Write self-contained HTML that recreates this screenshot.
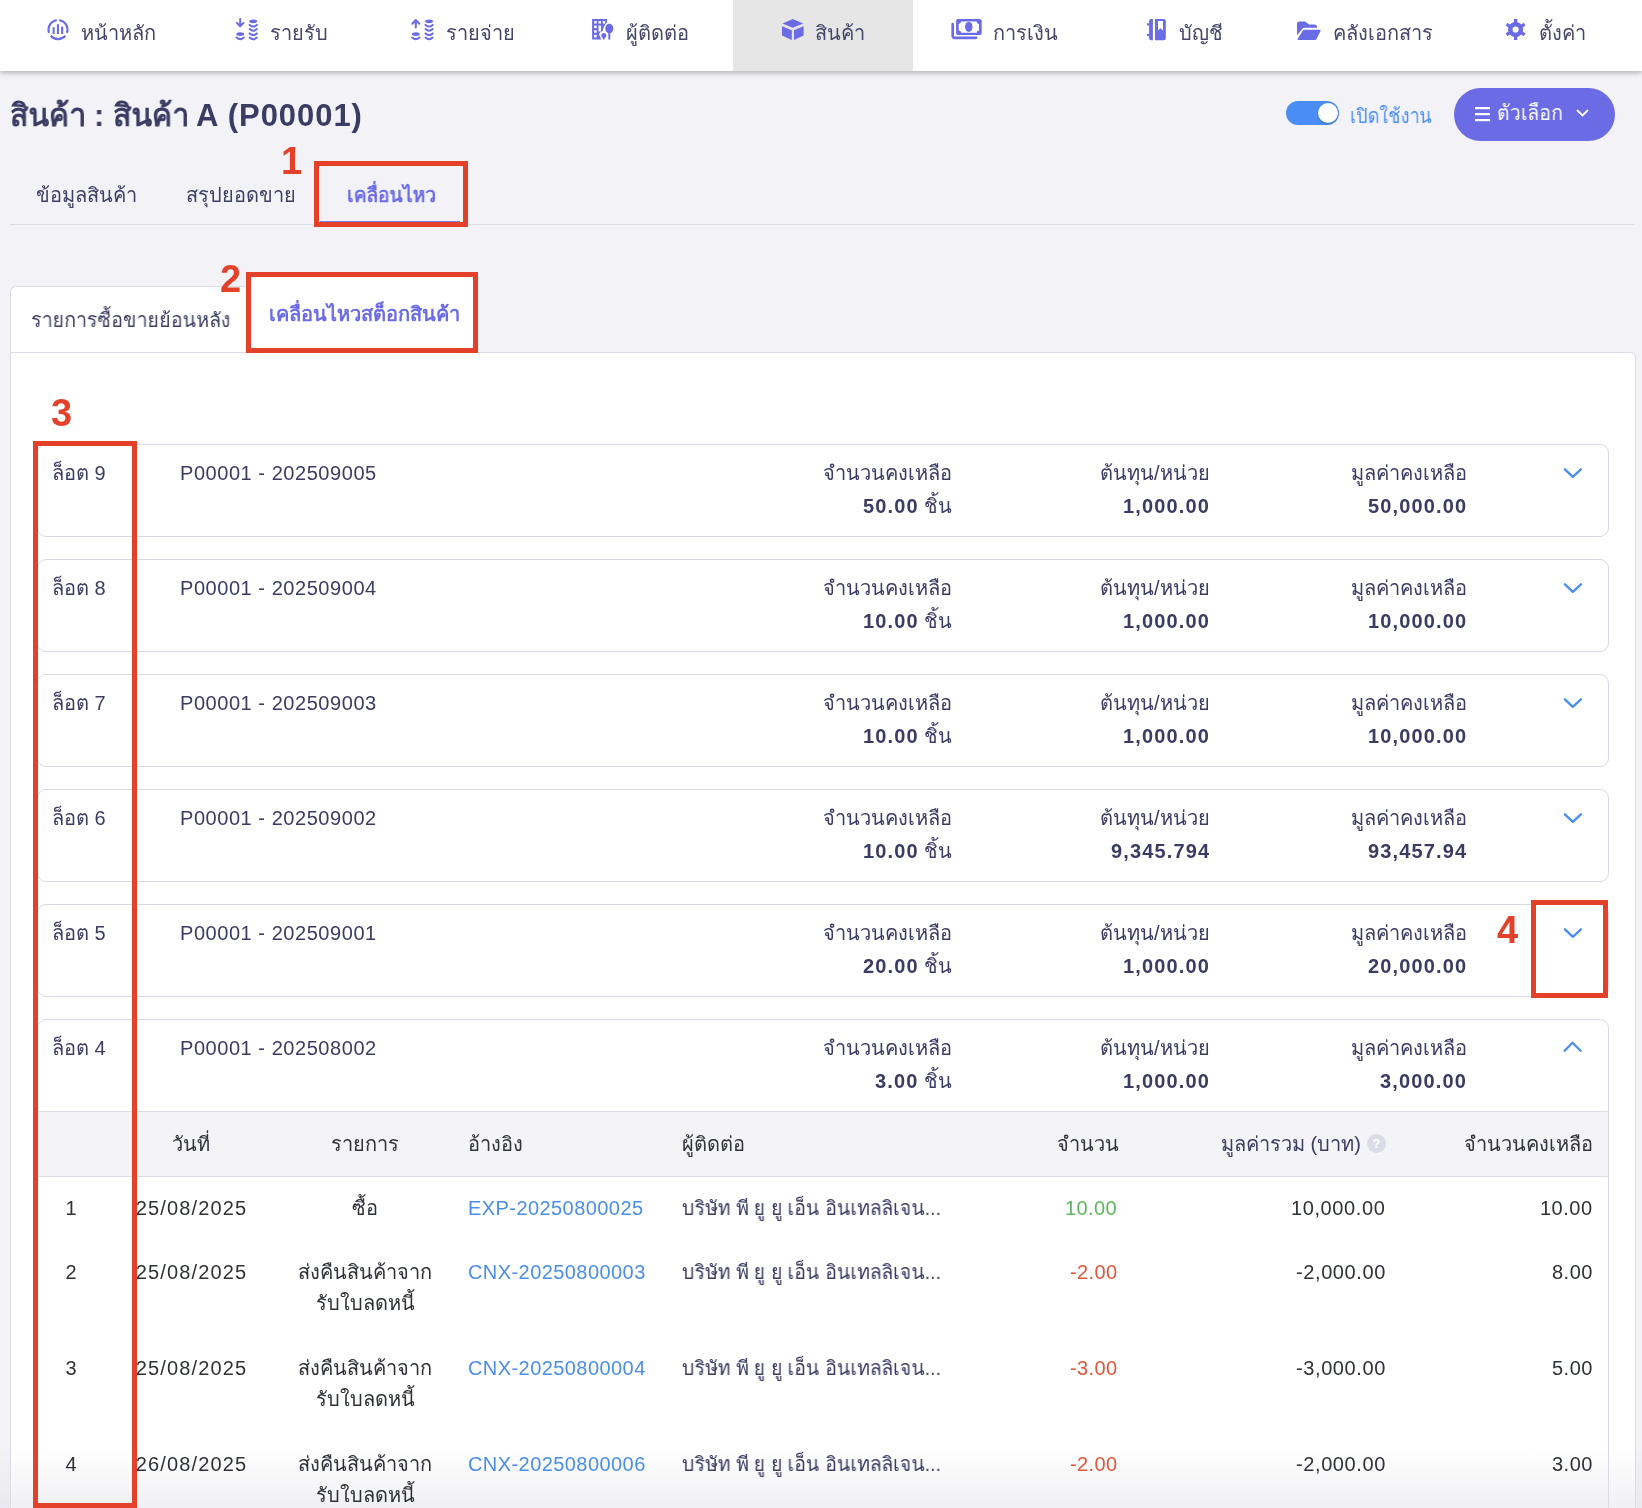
<!DOCTYPE html>
<html><head><meta charset="utf-8"><style>
*{box-sizing:border-box;margin:0;padding:0}
html,body{width:1642px;height:1508px;overflow:hidden}
body{background:#f3f2f7;font-family:"Liberation Sans",sans-serif;color:#3b3c63;position:relative}
.a,.ni,.td,.th,.rn{will-change:transform}
.a{position:absolute;white-space:nowrap}
#nav{position:absolute;left:0;top:0;width:1642px;height:71px;background:#fff;box-shadow:0 2px 5px rgba(0,0,0,.26);z-index:2}
#nav .act{position:absolute;left:733px;top:0;width:180px;height:71px;background:#e7e6e7}
.ni{position:absolute;top:18px;height:30px;line-height:30px;font-size:20px;color:#454669;white-space:nowrap}
.ic{position:absolute}
.red{position:absolute;border:5px solid #e4412b;z-index:5}
.rn{position:absolute;color:#e4412b;font-weight:bold;font-size:38px;line-height:38px;z-index:5}
.card{position:absolute;left:37px;width:1572px;height:93px;background:#fff;border:1px solid #d9d9e6;border-radius:9px}
.t20{font-size:20px;line-height:26px}
.r{text-align:right}
.b{font-weight:bold}
.chev{position:absolute}
.th{position:absolute;font-size:20px;line-height:26px;color:#30333b;white-space:nowrap}
.td{position:absolute;font-size:20px;line-height:26px;color:#2e3138;white-space:nowrap}
</style></head><body>
<div id="nav"><div class="act"></div>
<div class="ni" style="left:81px">หน้าหลัก</div>
<div class="ni" style="left:270px">รายรับ</div>
<div class="ni" style="left:446px">รายจ่าย</div>
<div class="ni" style="left:626px">ผู้ติดต่อ</div>
<div class="ni" style="left:815px">สินค้า</div>
<div class="ni" style="left:993px">การเงิน</div>
<div class="ni" style="left:1179px">บัญชี</div>
<div class="ni" style="left:1333px">คลังเอกสาร</div>
<div class="ni" style="left:1539px">ตั้งค่า</div>
<svg class="ic" style="left:44px;top:16px" width="30" height="30" viewBox="0 0 30 30"><path d="M12.84 4.17 A9.5 9.5 0 0 0 5.07 16.85 M6.72 19.71 A9.5 9.5 0 0 0 21.28 19.71 M22.93 16.85 A9.5 9.5 0 0 0 15.16 4.17" fill="none" stroke="#6b6be6" stroke-width="2.1"/><rect x="8.600000000000001" y="11.2" width="2.1" height="6.8" fill="#6b6be6"/><rect x="12.899999999999999" y="8.2" width="2.1" height="9.8" fill="#6b6be6"/><rect x="17.1" y="10.600000000000001" width="2.1" height="7.4" fill="#6b6be6"/></svg><svg class="ic" style="left:232px;top:16px" width="30" height="28" viewBox="0 0 30 28"><path d="M8.199999999999989 3.1000000000000014 V10 M4.899999999999989 6.899999999999999 L8.199999999999989 10.3 L11.49999999999999 6.899999999999999" stroke="#6b6be6" stroke-width="2" fill="none" stroke-linecap="round" stroke-linejoin="round"/><ellipse cx="8.199999999999989" cy="18.1" rx="3.9" ry="1.9" fill="#6b6be6"/><path d="M4.599999999999989 21.5 Q8.199999999999989 24.799999999999997 11.799999999999988 21.5" stroke="#6b6be6" stroke-width="2" fill="none" stroke-linecap="round"/><ellipse cx="21.19999999999999" cy="5.300000000000001" rx="3.9" ry="1.9" fill="#6b6be6"/><path d="M17.599999999999987 8.9 Q21.19999999999999 12.200000000000001 24.79999999999999 8.9" stroke="#6b6be6" stroke-width="2" fill="none" stroke-linecap="round"/><path d="M17.599999999999987 13.1 Q21.19999999999999 16.4 24.79999999999999 13.1" stroke="#6b6be6" stroke-width="2" fill="none" stroke-linecap="round"/><path d="M17.599999999999987 17.4 Q21.19999999999999 20.699999999999996 24.79999999999999 17.4" stroke="#6b6be6" stroke-width="2" fill="none" stroke-linecap="round"/><path d="M17.599999999999987 21.6 Q21.19999999999999 24.9 24.79999999999999 21.6" stroke="#6b6be6" stroke-width="2" fill="none" stroke-linecap="round"/></svg><svg class="ic" style="left:407px;top:16px" width="30" height="28" viewBox="0 0 30 28"><path d="M8.800000000000011 11.399999999999999 V4.5 M5.300000000000011 7.699999999999999 L8.800000000000011 4 L12.300000000000011 7.699999999999999" stroke="#6b6be6" stroke-width="2" fill="none" stroke-linecap="round" stroke-linejoin="round"/><ellipse cx="8.800000000000011" cy="18.1" rx="3.9" ry="1.9" fill="#6b6be6"/><path d="M5.200000000000012 21.5 Q8.800000000000011 24.799999999999997 12.400000000000011 21.5" stroke="#6b6be6" stroke-width="2" fill="none" stroke-linecap="round"/><ellipse cx="22.100000000000023" cy="5.300000000000001" rx="3.9" ry="1.9" fill="#6b6be6"/><path d="M18.50000000000002 8.9 Q22.100000000000023 12.200000000000001 25.700000000000024 8.9" stroke="#6b6be6" stroke-width="2" fill="none" stroke-linecap="round"/><path d="M18.50000000000002 13.1 Q22.100000000000023 16.4 25.700000000000024 13.1" stroke="#6b6be6" stroke-width="2" fill="none" stroke-linecap="round"/><path d="M18.50000000000002 17.4 Q22.100000000000023 20.699999999999996 25.700000000000024 17.4" stroke="#6b6be6" stroke-width="2" fill="none" stroke-linecap="round"/><path d="M18.50000000000002 21.6 Q22.100000000000023 24.9 25.700000000000024 21.6" stroke="#6b6be6" stroke-width="2" fill="none" stroke-linecap="round"/></svg><svg class="ic" style="left:587px;top:14px" width="30" height="30" viewBox="0 0 30 30"><path d="M5.100000000000023 5.100000000000001 H20 V8.5 Q16.5 11.5 15.700000000000045 17 L13 18.5 Q11 20.5 13.5 23 L14 25.5 H5.100000000000023Z" fill="#6b6be6"/><rect x="7.15" y="7.05" width="2.50" height="2.50" fill="#fff"/><rect x="11.45" y="7.05" width="2.50" height="2.50" fill="#fff"/><rect x="15.75" y="7.05" width="2.50" height="2.50" fill="#fff"/><rect x="7.15" y="11.55" width="2.50" height="2.50" fill="#fff"/><rect x="7.15" y="16.25" width="2.50" height="2.50" fill="#fff"/><rect x="7.15" y="20.85" width="2.50" height="2.50" fill="#fff"/><rect x="11.50" y="11.50" width="2.50" height="6.00" fill="#fff"/><ellipse cx="22.299999999999955" cy="14.600000000000001" rx="5" ry="5.9" fill="#fff"/><ellipse cx="22.299999999999955" cy="14.600000000000001" rx="4" ry="4.9" fill="#6b6be6"/><rect x="21.30" y="18.00" width="2.00" height="7.50" fill="#6b6be6"/><circle cx="16.799999999999955" cy="21.6" r="3.5" fill="#fff"/><circle cx="16.799999999999955" cy="21.6" r="2.5" fill="#6b6be6"/><rect x="16.00" y="22.50" width="1.60" height="3.00" fill="#6b6be6"/></svg><svg class="ic" style="left:776px;top:14px" width="32" height="32" viewBox="0 0 32 32"><path d="M6.40 9.40 L16.80 5.10 L27.20 9.40 L16.80 13.80Z M6.00 12.20 L15.80 16.30 L15.80 26.00 L6.00 21.50Z M27.60 12.20 L18.00 16.30 L18.00 26.00 L27.60 21.50Z" fill="#6b6be6"/></svg><svg class="ic" style="left:946px;top:12px" width="40" height="32" viewBox="0 0 40 32"><rect x="10.100000000000023" y="7.100000000000001" width="25.6" height="16" rx="2.2" fill="#6b6be6"/><path d="M15.00 9.60 L30.70 9.60 A2.3 2.3 0 0 0 33.00 11.90 L33.00 18.50 A2.3 2.3 0 0 0 30.70 20.80 L15.00 20.80 A2.3 2.3 0 0 0 12.70 18.50 L12.70 11.90 A2.3 2.3 0 0 0 15.00 9.60Z" fill="#fff"/><ellipse cx="22.799999999999955" cy="14.899999999999999" rx="3.7" ry="5" fill="#6b6be6"/><path d="M6.70 12.20 L6.70 24.00 A1.8 1.8 0 0 0 8.50 25.80 L30.00 25.80" fill="none" stroke="#6b6be6" stroke-width="2.7" stroke-linecap="round"/></svg><svg class="ic" style="left:1141px;top:14px" width="32" height="32" viewBox="0 0 32 32"><path d="M10.20 5.10 L11.90 5.10 L11.90 26.30 L10.20 26.30 A2.1 2.1 0 0 1 8.10 24.20 L8.10 7.20 A2.1 2.1 0 0 1 10.20 5.10Z" fill="#6b6be6"/><rect x="6.00" y="9.30" width="2.50" height="2.20" fill="#6b6be6"/><rect x="6.00" y="19.90" width="2.50" height="2.20" fill="#6b6be6"/><path d="M14.00 5.10 L22.60 5.10 A2.2 2.2 0 0 1 24.80 7.30 L24.80 24.10 A2.2 2.2 0 0 1 22.60 26.30 L14.00 26.30Z" fill="#6b6be6"/><path d="M17.00 7.00 L22.00 7.00 L22.00 16.50 L19.50 14.30 L17.00 16.50Z" fill="#fff"/></svg><svg class="ic" style="left:1293px;top:14px" width="32" height="32" viewBox="0 0 32 32"><path d="M4.00 21.20 L4.00 9.80 A2.2 2.2 0 0 1 6.20 7.60 L12.10 7.60 L16.10 10.40 L21.40 10.40 A2.6 2.6 0 0 1 24.00 13.00 L24.00 13.70 L11.30 13.70 A2.2 2.2 0 0 0 9.30 14.90Z" fill="#6b6be6"/><path d="M11.30 15.70 L26.60 15.70 A1 1 0 0 1 27.50 17.00 L23.40 25.20 A1.8 1.8 0 0 1 21.80 26.10 L5.60 26.10 A1 1 0 0 1 4.70 24.70 L9.70 16.70 A2 2 0 0 1 11.30 15.70Z" fill="#6b6be6"/></svg><svg class="ic" style="left:1500px;top:14px" width="32" height="32" viewBox="0 0 32 32"><path d="M11.80 8.92 L14.02 8.07 L13.85 5.05 L17.35 5.05 L17.18 8.07 L19.40 8.92 L21.25 10.41 L23.78 8.76 L25.53 11.79 L22.83 13.15 L23.20 15.50 L22.83 17.85 L25.53 19.21 L23.78 22.24 L21.25 20.59 L19.40 22.08 L17.18 22.93 L17.35 25.95 L13.85 25.95 L14.02 22.93 L11.80 22.08 L9.95 20.59 L7.42 22.24 L5.67 19.21 L8.37 17.85 L8.00 15.50 L8.37 13.15 L5.67 11.79 L7.42 8.76 L9.95 10.41Z M18.70 15.5 A3.1 3.1 0 1 0 12.50 15.5 A3.1 3.1 0 1 0 18.70 15.5Z" fill="#6b6be6" fill-rule="evenodd"/></svg>
</div>
<div class="a b" style="left:10px;top:96px;font-size:31px;line-height:40px;color:#3b3c63;transform:scaleX(0.972);transform-origin:0 0">สินค้า : สินค้า</div>
<div class="a b" style="left:196px;top:96px;font-size:31px;line-height:40px;color:#3b3c63;letter-spacing:0.95px">A (P00001)</div>
<div class="a" style="left:1286px;top:101px;width:53px;height:24px;border-radius:12px;background:#4a8ef5"></div>
<div class="a" style="left:1318px;top:103px;width:20px;height:20px;border-radius:10px;background:#fff;box-shadow:0 1px 2px rgba(0,0,0,.25)"></div>
<div class="a t20" style="left:1350px;top:102px;color:#4a8ef5;line-height:28px;transform:scaleX(0.89);transform-origin:0 0">เปิดใช้งาน</div>
<div class="a" style="left:1454px;top:88px;width:161px;height:53px;border-radius:27px;background:#6c6be6"></div>
<svg class="a" style="left:1475px;top:106px" width="15" height="16" viewBox="0 0 15 16"><rect y="1" width="15" height="2.2" fill="#fff"/><rect y="7" width="15" height="2.2" fill="#fff"/><rect y="13" width="15" height="2.2" fill="#fff"/></svg>
<div class="a t20" style="left:1497px;top:99px;color:#fff;line-height:28px;font-size:21px;transform:scaleX(0.92);transform-origin:0 0">ตัวเลือก</div>
<svg class="a" style="left:1576px;top:109px" width="13" height="8" viewBox="0 0 13 8"><path d="M1 1 L6.5 6.5 L12 1" fill="none" stroke="#fff" stroke-width="1.8"/></svg>
<div class="a t20" style="left:36px;top:182px;color:#3e3f62">ข้อมูลสินค้า</div>
<div class="a t20" style="left:186px;top:182px;color:#3e3f62">สรุปยอดขาย</div>
<div class="a t20 b" style="left:347px;top:182px;color:#6b6be6;transform:scaleX(0.965);transform-origin:0 0">เคลื่อนไหว</div>
<div class="a" style="left:10px;top:224px;width:1625px;height:1px;background:#dcdce3"></div>
<div class="a" style="left:320px;top:221px;width:140px;height:1px;background:#7b7cf0"></div>
<div class="rn" style="left:281px;top:142px">1</div>
<div class="red" style="left:314px;top:161px;width:154px;height:66px"></div>
<div class="a" style="left:10px;top:286px;width:237px;height:67px;background:#fff;border:1px solid #dcdce6;border-bottom:none;border-radius:6px 0 0 0"></div>
<div class="a" style="left:10px;top:352px;width:1626px;height:1200px;background:#fff;border:1px solid #dcdce6;border-radius:0 6px 0 0"></div>
<div class="a" style="left:247px;top:275px;width:229px;height:79px;background:#fff"></div><div class="a" style="left:477px;top:275px;width:1170px;height:77px;background:#f3f2f7"></div>
<div class="a t20" style="left:31px;top:307px;color:#3e3f62;transform:scaleX(0.978);transform-origin:0 0">รายการซื้อขายย้อนหลัง</div>
<div class="a t20 b" style="left:269px;top:301px;color:#6b6be6">เคลื่อนไหวสต็อกสินค้า</div>
<div class="rn" style="left:220px;top:260px">2</div>
<div class="red" style="left:246px;top:272px;width:232px;height:81px"></div>
<div class="card" style="top:444px;height:93px"></div>
<div class="a t20" style="left:52px;top:460px">ล็อต 9</div>
<div class="a t20" style="left:180px;top:460px;letter-spacing:0.55px">P00001 - 202509005</div>
<div class="a t20 r" style="right:690.00px;top:460px">จำนวนคงเหลือ</div>
<div class="a t20 r" style="right:432.00px;top:460px">ต้นทุน/หน่วย</div>
<div class="a t20 r" style="right:175.00px;top:460px">มูลค่าคงเหลือ</div>
<div class="a t20 r" style="right:690.00px;top:493px"><b style="letter-spacing:1.15px">50.00</b> ชิ้น</div>
<div class="a t20 r b" style="right:431.85px;top:493px;letter-spacing:1.15px">1,000.00</div>
<div class="a t20 r b" style="right:174.85px;top:493px;letter-spacing:1.15px">50,000.00</div>
<svg class="a" style="left:1560px;top:465px" width="26" height="16" viewBox="0 0 26 16"><path d="M4.9 4.3 L12.8 11.8 L20.9 4.3" fill="none" stroke="#4a8ef5" stroke-width="2.3" stroke-linecap="round" stroke-linejoin="round"/></svg>
<div class="card" style="top:559px;height:93px"></div>
<div class="a t20" style="left:52px;top:575px">ล็อต 8</div>
<div class="a t20" style="left:180px;top:575px;letter-spacing:0.55px">P00001 - 202509004</div>
<div class="a t20 r" style="right:690.00px;top:575px">จำนวนคงเหลือ</div>
<div class="a t20 r" style="right:432.00px;top:575px">ต้นทุน/หน่วย</div>
<div class="a t20 r" style="right:175.00px;top:575px">มูลค่าคงเหลือ</div>
<div class="a t20 r" style="right:690.00px;top:608px"><b style="letter-spacing:1.15px">10.00</b> ชิ้น</div>
<div class="a t20 r b" style="right:431.85px;top:608px;letter-spacing:1.15px">1,000.00</div>
<div class="a t20 r b" style="right:174.85px;top:608px;letter-spacing:1.15px">10,000.00</div>
<svg class="a" style="left:1560px;top:580px" width="26" height="16" viewBox="0 0 26 16"><path d="M4.9 4.3 L12.8 11.8 L20.9 4.3" fill="none" stroke="#4a8ef5" stroke-width="2.3" stroke-linecap="round" stroke-linejoin="round"/></svg>
<div class="card" style="top:674px;height:93px"></div>
<div class="a t20" style="left:52px;top:690px">ล็อต 7</div>
<div class="a t20" style="left:180px;top:690px;letter-spacing:0.55px">P00001 - 202509003</div>
<div class="a t20 r" style="right:690.00px;top:690px">จำนวนคงเหลือ</div>
<div class="a t20 r" style="right:432.00px;top:690px">ต้นทุน/หน่วย</div>
<div class="a t20 r" style="right:175.00px;top:690px">มูลค่าคงเหลือ</div>
<div class="a t20 r" style="right:690.00px;top:723px"><b style="letter-spacing:1.15px">10.00</b> ชิ้น</div>
<div class="a t20 r b" style="right:431.85px;top:723px;letter-spacing:1.15px">1,000.00</div>
<div class="a t20 r b" style="right:174.85px;top:723px;letter-spacing:1.15px">10,000.00</div>
<svg class="a" style="left:1560px;top:695px" width="26" height="16" viewBox="0 0 26 16"><path d="M4.9 4.3 L12.8 11.8 L20.9 4.3" fill="none" stroke="#4a8ef5" stroke-width="2.3" stroke-linecap="round" stroke-linejoin="round"/></svg>
<div class="card" style="top:789px;height:93px"></div>
<div class="a t20" style="left:52px;top:805px">ล็อต 6</div>
<div class="a t20" style="left:180px;top:805px;letter-spacing:0.55px">P00001 - 202509002</div>
<div class="a t20 r" style="right:690.00px;top:805px">จำนวนคงเหลือ</div>
<div class="a t20 r" style="right:432.00px;top:805px">ต้นทุน/หน่วย</div>
<div class="a t20 r" style="right:175.00px;top:805px">มูลค่าคงเหลือ</div>
<div class="a t20 r" style="right:690.00px;top:838px"><b style="letter-spacing:1.15px">10.00</b> ชิ้น</div>
<div class="a t20 r b" style="right:431.85px;top:838px;letter-spacing:1.15px">9,345.794</div>
<div class="a t20 r b" style="right:174.85px;top:838px;letter-spacing:1.15px">93,457.94</div>
<svg class="a" style="left:1560px;top:810px" width="26" height="16" viewBox="0 0 26 16"><path d="M4.9 4.3 L12.8 11.8 L20.9 4.3" fill="none" stroke="#4a8ef5" stroke-width="2.3" stroke-linecap="round" stroke-linejoin="round"/></svg>
<div class="card" style="top:904px;height:93px"></div>
<div class="a t20" style="left:52px;top:920px">ล็อต 5</div>
<div class="a t20" style="left:180px;top:920px;letter-spacing:0.55px">P00001 - 202509001</div>
<div class="a t20 r" style="right:690.00px;top:920px">จำนวนคงเหลือ</div>
<div class="a t20 r" style="right:432.00px;top:920px">ต้นทุน/หน่วย</div>
<div class="a t20 r" style="right:175.00px;top:920px">มูลค่าคงเหลือ</div>
<div class="a t20 r" style="right:690.00px;top:953px"><b style="letter-spacing:1.15px">20.00</b> ชิ้น</div>
<div class="a t20 r b" style="right:431.85px;top:953px;letter-spacing:1.15px">1,000.00</div>
<div class="a t20 r b" style="right:174.85px;top:953px;letter-spacing:1.15px">20,000.00</div>
<svg class="a" style="left:1560px;top:925px" width="26" height="16" viewBox="0 0 26 16"><path d="M4.9 4.3 L12.8 11.8 L20.9 4.3" fill="none" stroke="#4a8ef5" stroke-width="2.3" stroke-linecap="round" stroke-linejoin="round"/></svg>
<div class="card" style="top:1019px;height:700px"></div>
<div class="a" style="left:38px;top:1111px;width:1570px;height:66px;background:#f4f4f6;border-top:1px solid #dddde8;border-bottom:1px solid #dddde8"></div>
<div class="a" style="left:0;top:1448px;width:1642px;height:60px;background:linear-gradient(rgba(225,225,232,0),rgba(225,225,232,.48))"></div>
<div class="a t20" style="left:52px;top:1035px">ล็อต 4</div>
<div class="a t20" style="left:180px;top:1035px;letter-spacing:0.55px">P00001 - 202508002</div>
<div class="a t20 r" style="right:690.00px;top:1035px">จำนวนคงเหลือ</div>
<div class="a t20 r" style="right:432.00px;top:1035px">ต้นทุน/หน่วย</div>
<div class="a t20 r" style="right:175.00px;top:1035px">มูลค่าคงเหลือ</div>
<div class="a t20 r" style="right:690.00px;top:1068px"><b style="letter-spacing:1.15px">3.00</b> ชิ้น</div>
<div class="a t20 r b" style="right:431.85px;top:1068px;letter-spacing:1.15px">1,000.00</div>
<div class="a t20 r b" style="right:174.85px;top:1068px;letter-spacing:1.15px">3,000.00</div>
<svg class="a" style="left:1560px;top:1038px" width="26" height="16" viewBox="0 0 26 16"><path d="M4.6 12.7 L12.5 4.8 L20.6 12.7" fill="none" stroke="#4a8ef5" stroke-width="2.3" stroke-linecap="round" stroke-linejoin="round"/></svg>
<div class="th" style="left:151px;width:80px;text-align:center;top:1131px">วันที่</div>
<div class="th" style="left:305px;width:120px;text-align:center;top:1131px">รายการ</div>
<div class="th" style="left:468px;top:1131px">อ้างอิง</div>
<div class="th" style="left:682px;top:1131px">ผู้ติดต่อ</div>
<div class="th r" style="right:523px;top:1131px">จำนวน</div>
<div class="th r" style="right:281px;top:1131px;color:#3b3c63">มูลค่ารวม (บาท)</div>
<div class="a" style="left:1367px;top:1134px;width:19px;height:19px;border-radius:10px;background:#dcdce6;color:#fff;font-size:13px;line-height:19px;text-align:center;font-weight:bold">?</div>
<div class="th r" style="right:49px;top:1131px">จำนวนคงเหลือ</div>
<div class="td" style="left:31px;width:80px;text-align:center;top:1195px">1</div>
<div class="td" style="left:131px;width:120px;text-align:center;top:1195px;letter-spacing:1.15px;text-indent:1.15px">25/08/2025</div>
<div class="td" style="left:265px;width:200px;text-align:center;top:1195px">ซื้อ</div>
<div class="td" style="left:468px;top:1195px;color:#4a8ee8;letter-spacing:0.43px">EXP-20250800025</div>
<div class="td" style="left:682px;top:1195px;color:#3b3c63;transform:scaleX(0.968);transform-origin:0 0">บริษัท พี ยู ยู เอ็น อินเทลลิเจน...</div>
<div class="td r" style="right:524.60px;top:1195px;color:#5cb85c;letter-spacing:0.4px">10.00</div>
<div class="td r" style="right:256.40px;top:1195px;letter-spacing:0.6px">10,000.00</div>
<div class="td r" style="right:49.50px;top:1195px;letter-spacing:0.5px">10.00</div>
<div class="td" style="left:31px;width:80px;text-align:center;top:1259px">2</div>
<div class="td" style="left:131px;width:120px;text-align:center;top:1259px;letter-spacing:1.15px;text-indent:1.15px">25/08/2025</div>
<div class="td" style="left:265px;width:200px;text-align:center;top:1259px">ส่งคืนสินค้าจาก</div>
<div class="td" style="left:265px;width:200px;text-align:center;top:1290px">รับใบลดหนี้</div>
<div class="td" style="left:468px;top:1259px;color:#4a8ee8;letter-spacing:0.43px">CNX-20250800003</div>
<div class="td" style="left:682px;top:1259px;color:#3b3c63;transform:scaleX(0.968);transform-origin:0 0">บริษัท พี ยู ยู เอ็น อินเทลลิเจน...</div>
<div class="td r" style="right:524.60px;top:1259px;color:#e0583a;letter-spacing:0.4px">-2.00</div>
<div class="td r" style="right:256.40px;top:1259px;letter-spacing:0.6px">-2,000.00</div>
<div class="td r" style="right:49.50px;top:1259px;letter-spacing:0.5px">8.00</div>
<div class="td" style="left:31px;width:80px;text-align:center;top:1355px">3</div>
<div class="td" style="left:131px;width:120px;text-align:center;top:1355px;letter-spacing:1.15px;text-indent:1.15px">25/08/2025</div>
<div class="td" style="left:265px;width:200px;text-align:center;top:1355px">ส่งคืนสินค้าจาก</div>
<div class="td" style="left:265px;width:200px;text-align:center;top:1386px">รับใบลดหนี้</div>
<div class="td" style="left:468px;top:1355px;color:#4a8ee8;letter-spacing:0.43px">CNX-20250800004</div>
<div class="td" style="left:682px;top:1355px;color:#3b3c63;transform:scaleX(0.968);transform-origin:0 0">บริษัท พี ยู ยู เอ็น อินเทลลิเจน...</div>
<div class="td r" style="right:524.60px;top:1355px;color:#e0583a;letter-spacing:0.4px">-3.00</div>
<div class="td r" style="right:256.40px;top:1355px;letter-spacing:0.6px">-3,000.00</div>
<div class="td r" style="right:49.50px;top:1355px;letter-spacing:0.5px">5.00</div>
<div class="td" style="left:31px;width:80px;text-align:center;top:1451px">4</div>
<div class="td" style="left:131px;width:120px;text-align:center;top:1451px;letter-spacing:1.15px;text-indent:1.15px">26/08/2025</div>
<div class="td" style="left:265px;width:200px;text-align:center;top:1451px">ส่งคืนสินค้าจาก</div>
<div class="td" style="left:265px;width:200px;text-align:center;top:1482px">รับใบลดหนี้</div>
<div class="td" style="left:468px;top:1451px;color:#4a8ee8;letter-spacing:0.43px">CNX-20250800006</div>
<div class="td" style="left:682px;top:1451px;color:#3b3c63;transform:scaleX(0.968);transform-origin:0 0">บริษัท พี ยู ยู เอ็น อินเทลลิเจน...</div>
<div class="td r" style="right:524.60px;top:1451px;color:#e0583a;letter-spacing:0.4px">-2.00</div>
<div class="td r" style="right:256.40px;top:1451px;letter-spacing:0.6px">-2,000.00</div>
<div class="td r" style="right:49.50px;top:1451px;letter-spacing:0.5px">3.00</div>
<div class="rn" style="left:51px;top:394px">3</div>
<div class="red" style="left:33px;top:441px;width:104px;height:1067px"></div>
<div class="rn" style="left:1497px;top:911px">4</div>
<div class="red" style="left:1531px;top:900px;width:77px;height:98px"></div>
</body></html>
